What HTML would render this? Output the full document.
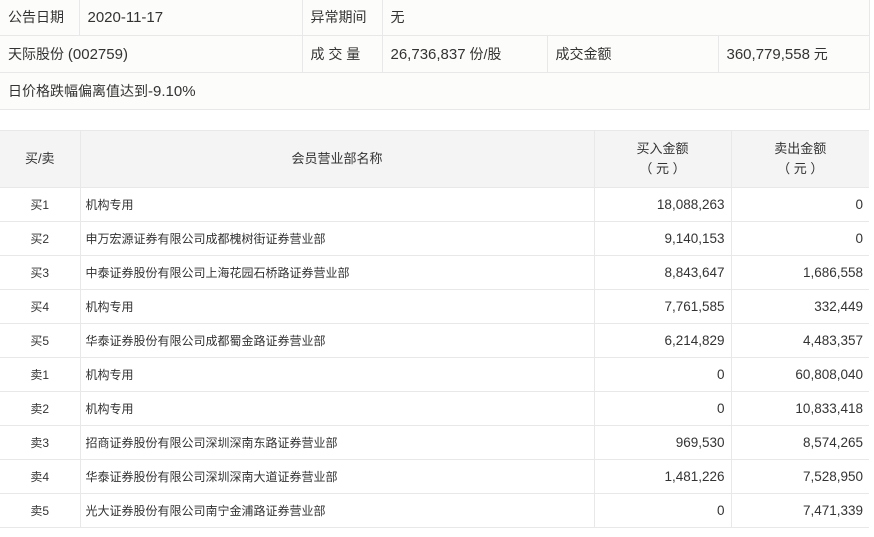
<!DOCTYPE html>
<html><head><meta charset="utf-8"><style>
*{margin:0;padding:0;box-sizing:border-box}
body{width:874px;height:537px;background:#fff;font-family:"Liberation Sans","Noto Sans CJK SC",sans-serif;color:#333;position:relative;overflow:hidden}
table{border-collapse:collapse;position:absolute;left:0;table-layout:fixed}
td{border:1px solid #e8e8e8;white-space:nowrap}
.l{font-size:15px}
#t1{top:-2px;width:869px;background:#fcfcfa;font-size:14px}
#t1 td{height:37px;padding-left:8px;border-left:none}
#t1 td:last-child{border-right:1px solid #e8e8e8}
#t2{top:130px;width:869px;font-size:12px}
#t2 td{height:34px;border-left:none}
#t2 tr:first-child td{height:57px;background:#f4f4f4;text-align:center;font-size:13px;line-height:20px}
#t2 td:first-child{text-align:center}
#t2 td.n{padding-left:5px}
#t2 td.r{text-align:right;padding-right:6px;font-size:13.5px}
#t2 td:last-child{border-right:none}
</style></head><body>
<table id="t1">
<colgroup><col style="width:79px"><col style="width:223px"><col style="width:80px"><col style="width:165px"><col style="width:171px"><col style="width:151px"></colgroup>
<tr><td>公告日期</td><td class="l">2020-11-17</td><td>异常期间</td><td colspan="3">无</td></tr>
<tr><td colspan="2">天际股份 <span class="l">(002759)</span></td><td>成 交 量</td><td><span class="l">26,736,837</span> 份/股</td><td>成交金额</td><td><span class="l">360,779,558</span> 元</td></tr>
<tr><td colspan="6">日价格跌幅偏离值达到<span class="l">-9.10%</span></td></tr>
</table>
<table id="t2">
<colgroup><col style="width:80px"><col style="width:514px"><col style="width:137px"><col style="width:138px"></colgroup>
<tr><td>买/卖</td><td>会员营业部名称</td><td>买入金额<br>（ 元 ）</td><td>卖出金额<br>（ 元 ）</td></tr>
<tr><td>买1</td><td class="n">机构专用</td><td class="r">18,088,263</td><td class="r">0</td></tr>
<tr><td>买2</td><td class="n">申万宏源证券有限公司成都槐树街证券营业部</td><td class="r">9,140,153</td><td class="r">0</td></tr>
<tr><td>买3</td><td class="n">中泰证券股份有限公司上海花园石桥路证券营业部</td><td class="r">8,843,647</td><td class="r">1,686,558</td></tr>
<tr><td>买4</td><td class="n">机构专用</td><td class="r">7,761,585</td><td class="r">332,449</td></tr>
<tr><td>买5</td><td class="n">华泰证券股份有限公司成都蜀金路证券营业部</td><td class="r">6,214,829</td><td class="r">4,483,357</td></tr>
<tr><td>卖1</td><td class="n">机构专用</td><td class="r">0</td><td class="r">60,808,040</td></tr>
<tr><td>卖2</td><td class="n">机构专用</td><td class="r">0</td><td class="r">10,833,418</td></tr>
<tr><td>卖3</td><td class="n">招商证券股份有限公司深圳深南东路证券营业部</td><td class="r">969,530</td><td class="r">8,574,265</td></tr>
<tr><td>卖4</td><td class="n">华泰证券股份有限公司深圳深南大道证券营业部</td><td class="r">1,481,226</td><td class="r">7,528,950</td></tr>
<tr><td>卖5</td><td class="n">光大证券股份有限公司南宁金浦路证券营业部</td><td class="r">0</td><td class="r">7,471,339</td></tr>
</table>
</body></html>
